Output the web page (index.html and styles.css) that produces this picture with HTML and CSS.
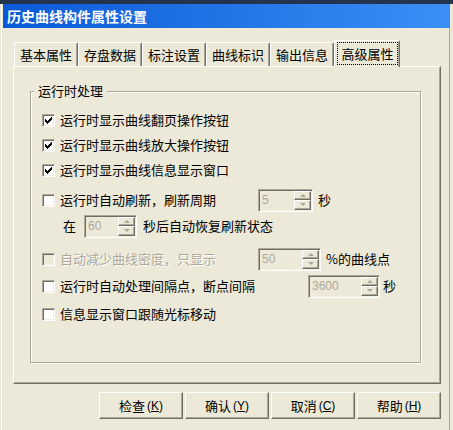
FILE: index.html
```html
<!DOCTYPE html>
<html lang="zh-CN">

<head>
	<meta charset="UTF-8">
	<title>历史曲线构件属性设置</title>
	<link rel="stylesheet" href="styles.css">
</head>

<body>
	<div class="desk"></div>
	<div class="window">
		<div class="titlebar">历史曲线构件属性设置</div>

		<div class="tabs">
			<div class="tab">基本属性</div>
			<div class="tab">存盘数据</div>
			<div class="tab">标注设置</div>
			<div class="tab">曲线标识</div>
			<div class="tab">输出信息</div>
			<div class="tab active"><span class="focus">高级属性</span></div>
		</div>

		<div class="panel">
			<div class="group">
				<span class="legend">运行时处理</span>

				<div class="row">
					<label class="opt"><span class="check on"><svg width="7" height="7" viewBox="0 0 7 7" shape-rendering="crispEdges"><path d="M6 0h1v1h-1z M5 1h2v1h-2z M0 2h1v1h-1z M4 2h3v1h-3z M0 3h2v1h-2z M3 3h3v1h-3z M0 4h5v1h-5z M1 5h3v1h-3z M2 6h1v1h-1z" fill="#000"/></svg></span>运行时显示曲线翻页操作按钮</label>
				</div>
				<div class="row gap1">
					<label class="opt"><span class="check on"><svg width="7" height="7" viewBox="0 0 7 7" shape-rendering="crispEdges"><path d="M6 0h1v1h-1z M5 1h2v1h-2z M0 2h1v1h-1z M4 2h3v1h-3z M0 3h2v1h-2z M3 3h3v1h-3z M0 4h5v1h-5z M1 5h3v1h-3z M2 6h1v1h-1z" fill="#000"/></svg></span>运行时显示曲线放大操作按钮</label>
				</div>
				<div class="row gap1">
					<label class="opt"><span class="check on"><svg width="7" height="7" viewBox="0 0 7 7" shape-rendering="crispEdges"><path d="M6 0h1v1h-1z M5 1h2v1h-2z M0 2h1v1h-1z M4 2h3v1h-3z M0 3h2v1h-2z M3 3h3v1h-3z M0 4h5v1h-5z M1 5h3v1h-3z M2 6h1v1h-1z" fill="#000"/></svg></span>运行时显示曲线信息显示窗口</label>
				</div>
				<div class="row gap6">
					<label class="opt w216"><span class="check"></span>运行时自动刷新，刷新周期</label>
					<div class="spin w55"><span class="val">5</span><span class="arrows"><span class="arr up"></span><span class="arr down"></span></span></div>
					<span class="unit">秒</span>
				</div>
				<div class="row gap2 indent">
					<span>在</span>
					<div class="spin w53 near"><span class="val">60</span><span class="arrows"><span class="arr up"></span><span class="arr down"></span></span></div>
					<span class="after">秒后自动恢复刷新状态</span>
				</div>
				<div class="row gap9">
					<label class="opt w216 disabled"><span class="check"></span>自动减少曲线密度，只显示</label>
					<div class="spin w63"><span class="val">50</span><span class="arrows"><span class="arr up"></span><span class="arr down"></span></span></div>
					<span class="unit">%的曲线点</span>
				</div>
				<div class="row gap3">
					<label class="opt w266"><span class="check"></span>运行时自动处理间隔点，断点间隔</label>
					<div class="spin w72"><span class="val">3600</span><span class="arrows"><span class="arr up"></span><span class="arr down"></span></span></div>
					<span class="unit tight">秒</span>
				</div>
				<div class="row gap4">
					<label class="opt"><span class="check"></span>信息显示窗口跟随光标移动</label>
				</div>
			</div>
		</div>

		<div class="buttons">
			<div class="btn">检查<span class="key">(<u>K</u>)</span></div>
			<div class="btn">确认<span class="key">(<u>Y</u>)</span></div>
			<div class="btn">取消<span class="key">(<u>C</u>)</span></div>
			<div class="btn">帮助<span class="key">(<u>H</u>)</span></div>
		</div>
	</div>
</body>

</html>
```

FILE: styles.css
```css
* {
	box-sizing: border-box;
}

body {
	margin: 0;
	width: 453px;
	height: 430px;
	overflow: hidden;
	background-color: #ece9d8;
	font-family: "Noto Sans CJK SC", "Liberation Sans", sans-serif;
	font-size: 13px;
	color: #000;
}

.desk {
	height: 4px;
	background-color: #22344e;
}

.window {
	height: 426px;
	border-left: 1px solid #ece9d8;
	border-right: 3px solid #ece9d8;
	padding-left: 2px;
	box-shadow: inset 1px 0 #fff, inset -1px 0 #aca899;
}

.titlebar {
	height: 24px;
	padding-left: 4px;
	display: flex;
	align-items: center;
	background: linear-gradient(to right, #0a5ad8, #3b8ff5);
	color: #fff;
	font-size: 14px;
	font-weight: bold;
}

/* tabs */
.tabs {
	display: flex;
	align-items: flex-end;
	height: 26px;
	margin-top: 12px;
	padding-left: 11px;
	position: relative;
	z-index: 1;
}

.tab {
	width: 64px;
	height: 24px;
	display: flex;
	align-items: center;
	justify-content: center;
	border-top: 1px solid #fff;
	border-left: 1px solid #fff;
	border-right: 1px solid #716f64;
	border-radius: 2px 2px 0 0;
	box-shadow: inset -1px 0 #aca899;
	line-height: 18px;
}

.tab.active {
	width: 66px;
	height: 27px;
	margin-bottom: -1px;
	padding: 1px 1px 2px 2px;
	background-color: #ece9d8;
}

.focus {
	flex: 1;
	align-self: stretch;
	display: flex;
	align-items: center;
	justify-content: center;
	border: 1px dotted #000;
}

/* page */
.panel {
	width: 428px;
	height: 318px;
	margin-left: 10px;
	padding: 24px 0 0 16px;
	border: 1px solid;
	border-color: #fff #716f64 #716f64 #fff;
	box-shadow: inset -1px -1px #aca899;
}

.group {
	position: relative;
	width: 391px;
	height: 272px;
	padding: 16px 0 0 11px;
	border: 1px solid #aca899;
	box-shadow: 1px 1px #fff, inset 1px 1px #fff;
}

.legend {
	position: absolute;
	top: -10px;
	left: 3px;
	padding: 0 4px;
	line-height: 18px;
	background-color: #ece9d8;
}

.row {
	display: flex;
	align-items: center;
	height: 24px;
	line-height: 18px;
	white-space: nowrap;
}

.gap1 { margin-top: 1px; }
.gap2 { margin-top: 2px; }
.gap3 { margin-top: 3px; }
.gap4 { margin-top: 4px; }
.gap6 { margin-top: 6px; }
.gap9 { margin-top: 9px; }

.indent {
	padding-left: 21px;
}

.opt {
	display: flex;
	align-items: center;
}

.w216 { width: 216px; }
.w266 { width: 266px; }

.check {
	flex: none;
	width: 13px;
	height: 13px;
	margin-right: 5px;
	padding: 2px;
	display: flex;
	align-items: center;
	justify-content: center;
	background-color: #fff;
	border: 1px solid;
	border-color: #aca899 #fff #fff #aca899;
	box-shadow: inset 1px 1px #716f64, inset -1px -1px #f1efe2;
}

.disabled {
	color: #aca899;
	text-shadow: 1px 1px #fff;
}

.disabled .check {
	background-color: #ece9d8;
}

/* spin boxes */
.spin {
	display: flex;
	height: 23px;
	padding: 1px;
	border: 1px solid;
	border-color: #aca899 #fff #fff #aca899;
	box-shadow: inset 1px 1px #716f64, inset -1px -1px #f1efe2;
}

.w53 { width: 53px; }
.w55 { width: 55px; }
.w63 { width: 63px; }
.w72 { width: 72px; }

.near {
	margin-left: 8px;
}

.val {
	flex: 1;
	padding-left: 2px;
	font-family: "Liberation Sans", sans-serif;
	font-size: 12px;
	line-height: 19px;
	color: #aca899;
}

.arrows {
	width: 17px;
	display: flex;
	flex-direction: column;
}

.arr {
	flex: 1;
	display: flex;
	align-items: center;
	justify-content: center;
	border: 1px solid;
	border-color: #fff #716f64 #716f64 #fff;
	box-shadow: inset -1px -1px #aca899;
}

.arr::before {
	content: "";
	border-left: 3px solid transparent;
	border-right: 3px solid transparent;
}

.arr.up::before {
	border-bottom: 3px solid #aca899;
}

.arr.down::before {
	border-top: 3px solid #aca899;
}

.unit {
	margin-left: 5px;
}

.unit.tight {
	margin-left: 3px;
}

.after {
	margin-left: 6px;
}

/* dialog buttons */
.buttons {
	display: flex;
	justify-content: flex-end;
	gap: 2px;
	width: 428px;
	margin: 8px 0 0 10px;
}

.btn {
	width: 84px;
	height: 27px;
	display: flex;
	align-items: center;
	justify-content: center;
	border: 1px solid;
	border-color: #fff #716f64 #716f64 #fff;
	box-shadow: inset -1px -1px #aca899;
	line-height: 18px;
}

.key {
	margin-left: 2px;
	font-family: "Liberation Sans", sans-serif;
	font-size: 12px;
}
```
